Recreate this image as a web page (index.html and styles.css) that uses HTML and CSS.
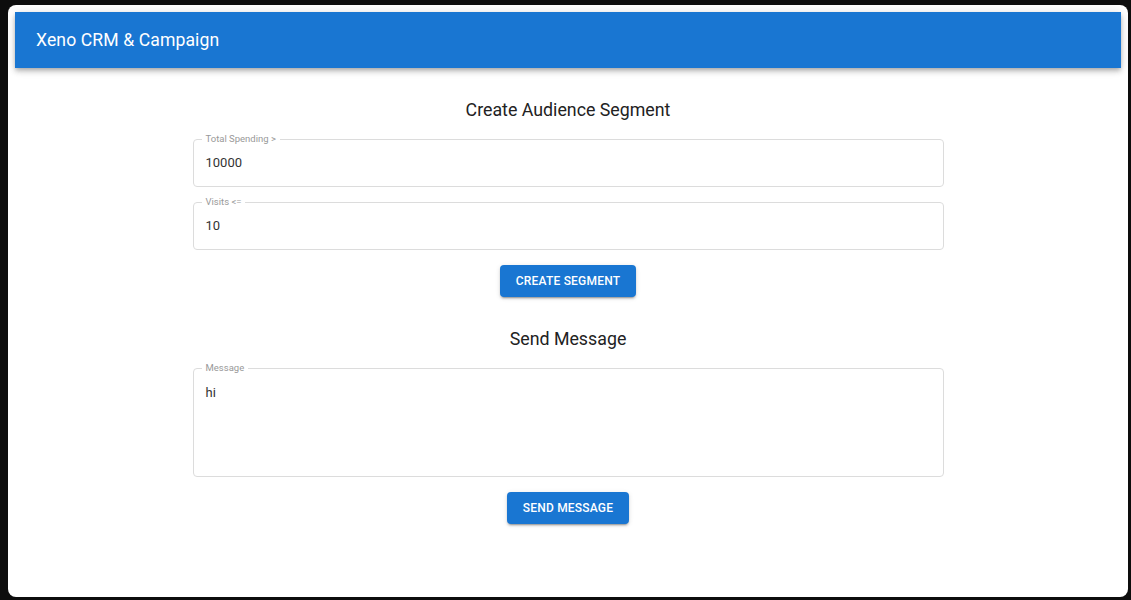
FILE: index.html
```html
<!DOCTYPE html>
<html lang="en">
<head>
<meta charset="utf-8">
<title>Xeno CRM & Campaign</title>
<link rel="stylesheet" href="styles.css">
</head>
<body>
<div class="window">
  <header class="appbar">
    <div class="brand">Xeno CRM &amp; Campaign</div>
  </header>
  <main class="container">
    <h2 class="section-title">Create Audience Segment</h2>
    <div class="field">
      <span class="field-label">Total Spending &gt;</span>
      <div class="field-value">10000</div>
    </div>
    <div class="field">
      <span class="field-label">Visits &lt;=</span>
      <div class="field-value">10</div>
    </div>
    <div class="actions">
      <button class="btn">Create Segment</button>
    </div>
    <h2 class="section-title second">Send Message</h2>
    <div class="field multiline">
      <span class="field-label">Message</span>
      <div class="field-value">hi</div>
    </div>
    <div class="actions">
      <button class="btn">Send Message</button>
    </div>
  </main>
</div>
</body>
</html>
```

FILE: styles.css
```css
* { box-sizing: border-box; }
html, body { height: 100%; }
body {
  margin: 0;
  background: #0d0d0d;
  font-family: Roboto, "Liberation Sans", Arial, sans-serif;
  padding: 5px 3px 3px 8px;
}
.window {
  height: 592px;
  background: #ffffff;
  border-radius: 8px;
  padding: 7px 7px 0 7px;
  overflow: hidden;
}
.appbar {
  height: 56px;
  background: #1976d2;
  color: #fff;
  display: flex;
  align-items: center;
  padding: 0 21px;
  box-shadow: 0 2px 4px -1px rgba(0,0,0,0.2), 0 4px 5px 0 rgba(0,0,0,0.14), 0 1px 10px 0 rgba(0,0,0,0.12);
}
.brand {
  font-size: 17.6px;
  font-weight: 400;
  letter-spacing: 0.1px;
  margin-top: -1px;
}
.container {
  width: 751px;
  margin: 0 auto;
  display: flex;
  flex-direction: column;
}
.section-title {
  margin: 30px 0 17px;
  text-align: center;
  font-size: 17.8px;
  font-weight: 400;
  line-height: 24px;
  color: #222;
}
.section-title.second { margin-top: 30px; }
.field {
  position: relative;
  height: 48px;
  border: 1px solid #dcdcdc;
  border-radius: 4px;
  padding: 0 12px;
  display: flex;
  align-items: center;
  margin-bottom: 15px;
}
.field-label {
  position: absolute;
  top: -7px;
  left: 8px;
  padding: 0 4px;
  background: #fff;
  font-size: 9.5px;
  line-height: 12px;
  color: #999;
}
.field-value {
  font-size: 13px;
  color: #333;
  line-height: 16px;
}
.field.multiline {
  height: 109px;
  align-items: flex-start;
  padding-top: 16px;
}
.actions {
  display: flex;
  justify-content: center;
}
.btn {
  height: 32px;
  padding: 0 16px;
  border: none;
  border-radius: 4px;
  background: #1976d2;
  color: #fff;
  font-family: Roboto, "Liberation Sans", Arial, sans-serif;
  font-size: 12px;
  font-weight: 500;
  letter-spacing: 0.2px;
  text-transform: uppercase;
  box-shadow: 0 3px 1px -2px rgba(0,0,0,0.2), 0 2px 2px 0 rgba(0,0,0,0.14), 0 1px 5px 0 rgba(0,0,0,0.12);
  cursor: pointer;
}
```
